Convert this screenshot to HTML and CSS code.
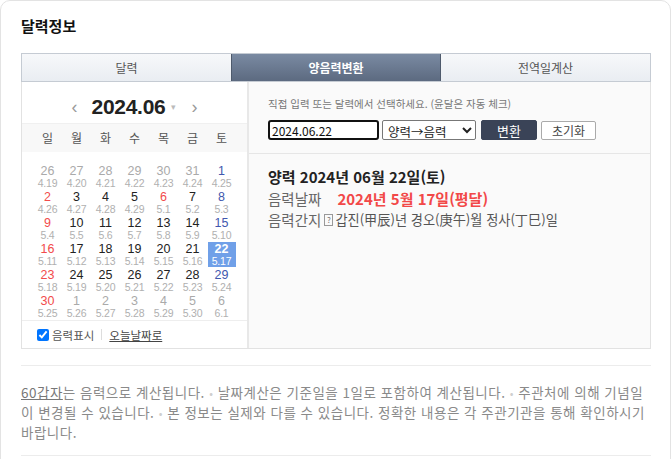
FILE: index.html
```html
<!DOCTYPE html>
<html lang="ko">
<head>
<meta charset="utf-8">
<link rel="stylesheet" href="styles.css">
</head>
<body>
<div class="card">
  <h2 class="title">달력정보</h2>
  <div class="tabs">
    <div class="tab">달력</div>
    <div class="tab active">양음력변환</div>
    <div class="tab">전역일계산</div>
  </div>
  <div class="panel">
    <div class="cal">
      <div class="cal-head">
        <span class="arr prev">‹</span>
        <span class="ym">2024.06</span>
        <span class="caret">▾</span>
        <span class="arr next">›</span>
      </div>
      <div class="week">
        <span>일</span><span>월</span><span>화</span><span>수</span><span>목</span><span>금</span><span>토</span>
      </div>
      <div class="days">
        <div class="d o"><b>26</b><i>4.19</i></div>
        <div class="d o"><b>27</b><i>4.20</i></div>
        <div class="d o"><b>28</b><i>4.21</i></div>
        <div class="d o"><b>29</b><i>4.22</i></div>
        <div class="d o"><b>30</b><i>4.23</i></div>
        <div class="d o"><b>31</b><i>4.24</i></div>
        <div class="d sat"><b>1</b><i>4.25</i></div>

        <div class="d sun"><b>2</b><i>4.26</i></div>
        <div class="d"><b>3</b><i>4.27</i></div>
        <div class="d"><b>4</b><i>4.28</i></div>
        <div class="d"><b>5</b><i>4.29</i></div>
        <div class="d sun"><b>6</b><i>5.1</i></div>
        <div class="d"><b>7</b><i>5.2</i></div>
        <div class="d sat"><b>8</b><i>5.3</i></div>

        <div class="d sun"><b>9</b><i>5.4</i></div>
        <div class="d"><b>10</b><i>5.5</i></div>
        <div class="d"><b>11</b><i>5.6</i></div>
        <div class="d"><b>12</b><i>5.7</i></div>
        <div class="d"><b>13</b><i>5.8</i></div>
        <div class="d"><b>14</b><i>5.9</i></div>
        <div class="d sat"><b>15</b><i>5.10</i></div>

        <div class="d sun"><b>16</b><i>5.11</i></div>
        <div class="d"><b>17</b><i>5.12</i></div>
        <div class="d"><b>18</b><i>5.13</i></div>
        <div class="d"><b>19</b><i>5.14</i></div>
        <div class="d"><b>20</b><i>5.15</i></div>
        <div class="d"><b>21</b><i>5.16</i></div>
        <div class="d sel"><b>22</b><i>5.17</i></div>

        <div class="d sun"><b>23</b><i>5.18</i></div>
        <div class="d"><b>24</b><i>5.19</i></div>
        <div class="d"><b>25</b><i>5.20</i></div>
        <div class="d"><b>26</b><i>5.21</i></div>
        <div class="d"><b>27</b><i>5.22</i></div>
        <div class="d"><b>28</b><i>5.23</i></div>
        <div class="d sat"><b>29</b><i>5.24</i></div>

        <div class="d sun"><b>30</b><i>5.25</i></div>
        <div class="d o"><b>1</b><i>5.26</i></div>
        <div class="d o"><b>2</b><i>5.27</i></div>
        <div class="d o"><b>3</b><i>5.28</i></div>
        <div class="d o"><b>4</b><i>5.29</i></div>
        <div class="d o"><b>5</b><i>5.30</i></div>
        <div class="d o"><b>6</b><i>6.1</i></div>
      </div>
      <div class="cal-foot">
        <label class="chk"><input type="checkbox" checked>음력표시</label>
        <span class="sep"></span>
        <a class="today">오늘날짜로</a>
      </div>
    </div>
    <div class="divider"></div>
    <div class="conv">
      <div class="conv-top">
        <p class="hint">직접 입력 또는 달력에서 선택하세요. (윤달은 자동 체크)</p>
        <div class="controls">
          <input class="date" type="text" value="2024.06.22">
          <select class="mode"><option>양력→음력</option></select>
          <button class="btn primary">변환</button>
          <button class="btn">초기화</button>
        </div>
      </div>
      <div class="result">
        <p class="solar">양력 2024년 06월 22일(토)</p>
        <p class="row"><span class="lbl">음력날짜</span><strong class="lunar">2024년 5월 17일(평달)</strong></p>
        <p class="row gz"><span class="lbl2">음력간지</span><span class="qbox">?</span><span class="ganji">갑진(甲辰)년 경오(庚午)월 정사(丁巳)일</span></p>
      </div>
    </div>
  </div>
  <div class="notice"><u>60갑자</u>는 음력으로 계산됩니다. <span class="dot">•</span> 날짜계산은 기준일을 1일로 포함하여 계산됩니다. <span class="dot">•</span> 주관처에 의해 기념일이 변경될 수 있습니다. <span class="dot">•</span> 본 정보는 실제와 다를 수 있습니다. 정확한 내용은 각 주관기관을 통해 확인하시기 <span class="nw">바랍니다.</span></div>
</div>
</body>
</html>
```
FILE: styles.css
```css
* { box-sizing: border-box; }
body {
  margin: 0;
  background: #fff;
  font-family: "Noto Sans CJK KR", "Noto Sans", sans-serif;
  color: #333;
}
.card {
  width: 671px;
  border: 1px solid #e3e3e3;
  border-radius: 10px;
  padding: 13px 19px 30px 20px;
  background: #fff;
}
.title {
  margin: 0;
  font-size: 15px;
  font-weight: bold;
  line-height: 24px;
  color: #111;
}
.tabs {
  margin-top: 15px;
  display: grid;
  grid-template-columns: 209px 210px 1fr;
  border: 1px solid #c5cbd3;
  height: 29px;
}
.tab {
  text-align: center;
  font-size: 12px;
  line-height: 27px;
  color: #555;
  background: linear-gradient(#f7f8fa, #e9edf2);
}
.tab.active {
  color: #fff;
  font-weight: bold;
  background: linear-gradient(#7a8aa2, #5c6a80);
  border-left: 1px solid #4e5a6c;
  border-right: 1px solid #4e5a6c;
}
.panel {
  display: grid;
  grid-template-columns: 225px 2px 1fr;
  height: 267px;
  border: 1px solid #e2e2e2;
  border-top: 0;
}
.divider { background: #e8e8e8; }
.cal { display: flex; flex-direction: column; background: #fff; }
.cal-head {
  height: 42px;
  border-bottom: 1px solid #f0f0f0;
  display: flex;
  justify-content: center;
  align-items: center;
  padding-top: 8px;
}
.arr {
  color: #9a9a9a;
  font-family: "Liberation Sans", Arial, sans-serif;
  font-size: 18px;
  line-height: 20px;
}
.arr.prev { margin-right: 14px; }
.arr.next { margin-left: 15px; }
.ym {
  font-family: "Liberation Sans", Arial, sans-serif;
  font-weight: bold;
  font-size: 21px;
  color: #222;
  letter-spacing: -0.3px;
}
.caret { color: #bbb; font-size: 9px; margin-left: 6px; }
.week {
  height: 28px;
  background: #f8f8f8;
  display: grid;
  grid-template-columns: repeat(7, 29px);
  justify-content: center;
  font-size: 12px;
  line-height: 28px;
  color: #555;
  text-align: center;
}
.days {
  padding-top: 12px;
  display: grid;
  grid-template-columns: repeat(7, 29px);
  grid-auto-rows: 26px;
  justify-content: center;
  height: 168px;
}
.d {
  width: 28px;
  height: 25px;
  margin: 0 auto;
  text-align: center;
  display: flex;
  flex-direction: column;
  font-family: "Liberation Sans", Arial, sans-serif;
}
.d b {
  font-weight: normal;
  font-size: 12.5px;
  line-height: 14px;
  color: #222;
}
.d i {
  font-style: normal;
  font-size: 10.5px;
  line-height: 11px;
  color: #b0b0b0;
  letter-spacing: -0.2px;
}
.d.o b { color: #aaa; }
.d.sun b { color: #f24b4b; }
.d.sat b { color: #4157ae; }
.d.sel { background: #70a0e8; }
.d.sel b { color: #fff; font-weight: bold; }
.d.sel i { color: #fff; }
.cal-foot {
  flex: 1;
  border-top: 1px solid #eee;
  display: flex;
  align-items: center;
  padding-left: 15px;
  font-size: 11.5px;
  color: #555;
}
.chk { display: flex; align-items: center; }
.chk input { margin: 0 3px 0 0; width: 12px; height: 12px; }
.sep { width: 1px; height: 11px; background: #ddd; margin: 0 7px; }
.today { color: #444; text-decoration: underline; }
.conv { background: #fafafa; }
.conv-top {
  height: 72px;
  border-bottom: 1px solid #e6e6e6;
  padding: 15px 0 0 19px;
}
.hint {
  margin: 0;
  font-size: 10.5px;
  line-height: 14px;
  color: #777;
}
.controls {
  margin-top: 9px;
  display: flex;
  align-items: center;
}
.date {
  width: 111px;
  height: 20px;
  border: 2px solid #111;
  border-radius: 3px;
  padding: 0 2px;
  font-family: "Noto Sans CJK KR", sans-serif;
  font-size: 12px;
  color: #111;
  background: #fff;
}
.mode {
  margin-left: 3px;
  width: 94px;
  height: 20px;
  border: 1px solid #777;
  border-radius: 2px;
  font-family: "Noto Sans CJK KR", sans-serif;
  font-size: 12.5px;
  color: #222;
  background: #fff;
  padding: 0 1px;
}
.btn {
  height: 19px;
  width: 55px;
  margin-left: 4px;
  border: 1px solid #aaa;
  border-radius: 2px;
  background: #fff;
  font-family: "Noto Sans CJK KR", sans-serif;
  font-size: 12px;
  color: #444;
  padding: 0;
}
.btn.primary {
  width: 56px;
  height: 20px;
  margin-left: 5px;
  background: #3a4357;
  border-color: #3a4357;
  color: #fff;
  font-size: 13px;
}
.result { padding: 12px 0 0 19px; }
.result p { margin: 0; }
.solar {
  font-size: 15px;
  font-weight: bold;
  line-height: 22px;
  color: #222;
}
.row {
  display: flex;
  align-items: center;
  font-size: 14.5px;
  line-height: 22px;
  color: #555;
}
.lbl { color: #666; margin-right: 16px; }
.lunar { color: #f24848; font-size: 15px; }
.gz { line-height: 20px; }
.lbl2 { color: #666; margin-right: 3px; }
.ganji { font-size: 13.2px; }
.qbox {
  display: inline-block;
  width: 9px;
  height: 12px;
  border: 1px solid #999;
  font-size: 8px;
  line-height: 10px;
  text-align: center;
  color: #777;
  margin-right: 2px;
}
.notice {
  margin-top: 16px;
  border-top: 1px solid #ececec;
  border-bottom: 1px solid #ececec;
  padding: 16px 0 13px;
  font-size: 13.5px;
  line-height: 20px;
  letter-spacing: 0.5px;
  word-break: break-all;
  color: #8a8a8a;
}
.notice u { color: #777; }
.dot { color: #cfcfcf; font-size: 11px; line-height: 1; }
.nw { white-space: nowrap; }
```
